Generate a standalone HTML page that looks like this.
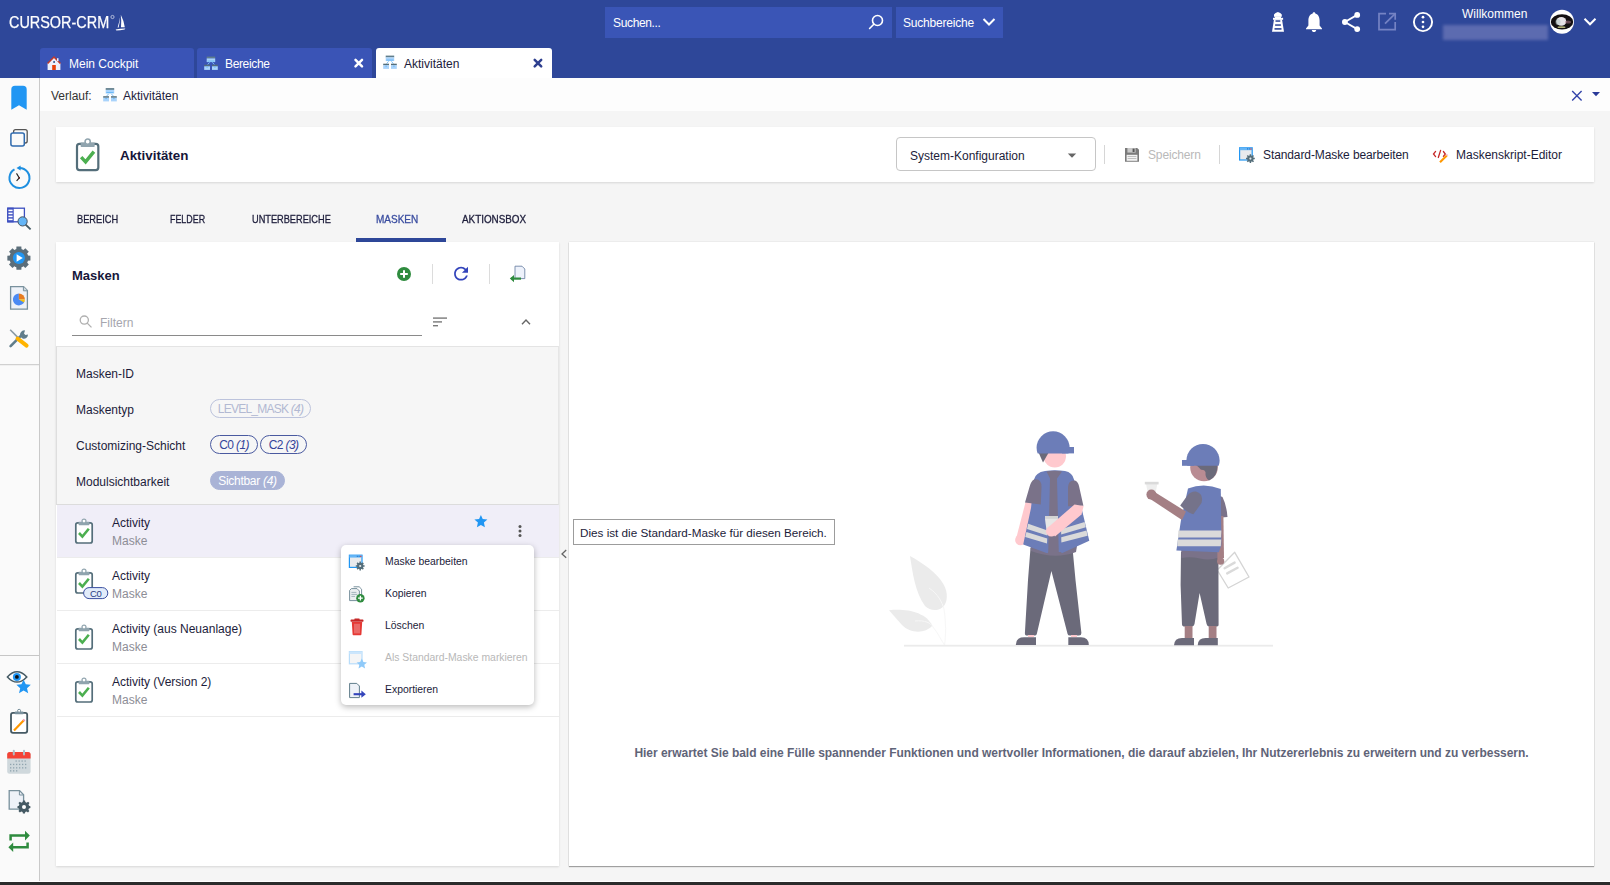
<!DOCTYPE html>
<html><head><meta charset="utf-8">
<style>
*{box-sizing:border-box;margin:0;padding:0}
html,body{width:1610px;height:885px;overflow:hidden;background:#f5f5f5;font-family:"Liberation Sans",sans-serif;color:#1c1c3a}
.abs{position:absolute}
svg{display:block}
/* header */
#hdr{position:absolute;left:0;top:0;width:1610px;height:78px;background:#2e4799}
#logo{position:absolute;left:9px;top:13px;color:#fff;-webkit-text-stroke:0.25px #fff;font-size:16.4px;letter-spacing:0;transform:scaleX(0.88);transform-origin:0 0;white-space:nowrap}
.srch{position:absolute;top:7px;height:31px;background:#3a55b6}
.srch span{position:absolute;color:#fff;font-size:12px;top:9px;white-space:nowrap}
.tab{position:absolute;top:48px;height:30px;background:#3a54b6;border-radius:3px 3px 0 0}
.tab .t{position:absolute;top:9px;font-size:12px;color:#fff;white-space:nowrap}
.tab.act{background:#fff}
.tab.act .t{color:#1c1c3a}
/* sidebar */
#side{position:absolute;left:0;top:78px;width:40px;height:804px;background:#fafafa;border-right:1px solid #c9c9c9}
/* breadcrumb */
#bc{position:absolute;left:40px;top:78px;width:1570px;height:33px;background:#fdfdfd}
.txt{position:absolute;white-space:nowrap;font-size:12px}
.card{position:absolute;background:#fff;box-shadow:0 1px 2px rgba(0,0,0,0.12)}
.mtab{position:absolute;top:213px;font-size:11px;transform-origin:0 0;-webkit-text-stroke:0.3px currentColor;color:#1c1c3a;white-space:nowrap}
.chip{position:absolute;height:19px;border-radius:10px;border:1px solid #4a5aa0;font-size:12px;color:#34449a;padding:0;white-space:nowrap;text-align:center;line-height:18px}
.chip i{font-style:italic}
.item{position:absolute;left:57px;width:502px;height:53px;border-bottom:1px solid #ececec}
.item .n{position:absolute;left:55px;top:11px;font-size:12px;color:#1c1c3a;white-space:nowrap}
.item .s{position:absolute;left:55px;top:29px;font-size:12px;color:#8d8d96;white-space:nowrap}
.mi{position:absolute;left:44px;font-size:10.4px;color:#1c1c3a;white-space:nowrap}
</style></head><body>

<div id="hdr">
  <div id="logo">CURSOR-CRM</div>
  <div class="srch" style="left:605px;width:287px"><span style="left:8px;letter-spacing:-0.35px">Suchen...</span></div>
  <div class="srch" style="left:896px;width:107px"><span style="left:7px;letter-spacing:-0.2px">Suchbereiche</span></div>

  <div class="tab" style="left:40px;width:154px"><span class="t" style="left:29px">Mein Cockpit</span></div>
  <div class="tab" style="left:197px;width:175px"><span class="t" style="left:28px;letter-spacing:-0.35px">Bereiche</span></div>
  <div class="tab act" style="left:376px;width:176px"><span class="t" style="left:28px">Aktivitäten</span></div>

  <div class="txt" style="left:1462px;top:7px;color:#fff;font-size:12px">Willkommen</div>
  <div class="abs" style="left:1443px;top:25px;width:105px;height:15px;background:#5c6bb0;filter:blur(1.5px)"></div>
</div>

<div id="side"></div>

<div id="bc">
  <div class="txt" style="left:11px;top:11px;color:#333">Verlauf:</div>
  <div class="txt" style="left:83px;top:11px;color:#1c1c3a">Aktivitäten</div>
</div>

<!-- header card -->
<div class="card" style="left:56px;top:127px;width:1538px;height:55px">
  <div class="txt" style="left:64px;top:21px;font-size:13.4px;font-weight:bold;color:#16163a">Aktivitäten</div>
  <div class="abs" style="left:840px;top:10px;width:200px;height:34px;border:1px solid #c6c6c6;border-radius:4px">
    <div class="txt" style="left:13px;top:11px">System-Konfiguration</div>
  </div>
  <div class="abs" style="left:1048px;top:18px;width:1px;height:19px;background:#d6d6d6"></div>
  <div class="txt" style="left:1092px;top:21px;color:#b9b9b9;letter-spacing:-0.15px">Speichern</div>
  <div class="abs" style="left:1163px;top:18px;width:1px;height:19px;background:#d6d6d6"></div>
  <div class="txt" style="left:1207px;top:21px;letter-spacing:-0.1px">Standard-Maske bearbeiten</div>
  <div class="txt" style="left:1400px;top:21px;letter-spacing:0px">Maskenskript-Editor</div>
</div>

<!-- masks tabs -->
<div class="mtab" style="left:77px;transform:scaleX(0.842)">BEREICH</div>
<div class="mtab" style="left:170px;transform:scaleX(0.808)">FELDER</div>
<div class="mtab" style="left:252px;transform:scaleX(0.837)">UNTERBEREICHE</div>
<div class="mtab" style="left:376px;color:#3a4da0;transform:scaleX(0.91)">MASKEN</div>
<div class="mtab" style="left:462px;transform:scaleX(0.896)">AKTIONSBOX</div>
<div class="abs" style="left:356px;top:238px;width:90px;height:4px;background:#2e4799"></div>

<!-- left panel -->
<div class="card" style="left:56px;top:242px;width:503px;height:624px">
  <div class="txt" style="left:16px;top:26px;font-size:13px;font-weight:bold;color:#16163a">Masken</div>
  <div class="abs" style="left:376px;top:22px;width:1px;height:20px;background:#dcdcdc"></div>
  <div class="abs" style="left:433px;top:22px;width:1px;height:20px;background:#dcdcdc"></div>
  <div class="txt" style="left:44px;top:74px;color:#a6a6ae">Filtern</div>
  <div class="abs" style="left:16px;top:93px;width:350px;height:1px;background:#8a8a8a"></div>
</div>
<div class="abs" style="left:56px;top:346px;width:503px;height:159px;background:#f6f6f6;border-top:1px solid #e4e4e4;border-left:1px solid #dedede;border-right:1px solid #e6e6e6;border-bottom:1px solid #dcdcdc">
  <div class="txt" style="left:19px;top:20px">Masken-ID</div>
  <div class="txt" style="left:19px;top:56px">Maskentyp</div>
  <div class="txt" style="left:19px;top:92px">Customizing-Schicht</div>
  <div class="txt" style="left:19px;top:128px">Modulsichtbarkeit</div>
  <div class="chip" style="left:153px;top:52px;width:101px;border-color:#bcc3dc;color:#b2b9d2;letter-spacing:-0.75px">LEVEL_MASK <i>(4)</i></div>
  <div class="chip" style="left:153px;top:88px;width:48px;letter-spacing:-0.6px">C0 <i>(1)</i></div>
  <div class="chip" style="left:203px;top:88px;width:47px;letter-spacing:-0.6px">C2 <i>(3)</i></div>
  <div class="chip" style="left:153px;top:124px;width:75px;background:#a9b3d6;border-color:#a9b3d6;color:#fff;letter-spacing:-0.3px">Sichtbar <i>(4)</i></div>
</div>
<div class="item" style="top:505px;background:#f0eef8;height:53px"><div class="n">Activity</div><div class="s">Maske</div></div>
<div class="item" style="top:558px"><div class="n">Activity</div><div class="s">Maske</div></div>
<div class="item" style="top:611px"><div class="n">Activity (aus Neuanlage)</div><div class="s">Maske</div></div>
<div class="item" style="top:664px"><div class="n">Activity (Version 2)</div><div class="s">Maske</div></div>


<!-- right panel -->
<div class="card" style="left:569px;top:242px;width:1025px;height:624px;box-shadow:0 1px 1px rgba(0,0,0,0.32),0 0 1.5px rgba(0,0,0,0.14)">
  <div class="txt" style="left:0;width:1025px;text-align:center;top:504px;font-weight:bold;color:#5f6478;letter-spacing:-0.03px">Hier erwartet Sie bald eine Fülle spannender Funktionen und wertvoller Informationen, die darauf abzielen, Ihr Nutzererlebnis zu erweitern und zu verbessern.</div>
</div>


<svg class="abs" style="left:0;top:0;z-index:5" width="1610" height="885" viewBox="0 0 1610 885">
<!-- logo sailboat -->
<g fill="#fff">
 <circle cx="112.5" cy="17" r="1.6" fill="none" stroke="#fff" stroke-width="0.6"/>
 <path d="M120.8 14.8 Q124 21 124.8 27.2 L121 27.2 Q121.6 21 120.8 14.8 Z"/>
 <path d="M120.2 16.5 Q119.4 22 117.6 27.6 L118.6 27.6 Q120 22 120.2 16.5 Z"/>
 <path d="M115.6 29.6 Q120 28.4 125.4 28.4 L124.6 29.4 Q120 30.4 116.4 30.4 Z"/>
</g>
<!-- search magnifier -->
<g stroke="#fff" stroke-width="1.6" fill="none">
 <circle cx="877.5" cy="20.5" r="5"/>
 <path d="M873.8 24.3 L869.6 28.5" stroke-linecap="round"/>
 <path d="M983.5 19 L989 24.5 L994.5 19" stroke-width="2"/>
</g>
<!-- lighthouse -->
<g fill="#fff">
 <path d="M1274 16.8 L1274 14.4 Q1275.2 12.8 1277.9 11.9 Q1280.6 12.8 1281.8 14.4 L1281.8 16.8 Z"/>
 <rect x="1274.8" y="16.4" width="6.2" height="1.6"/>
 <rect x="1273" y="17.8" width="10.1" height="2"/>
 <path d="M1274 19.6 L1282 19.6 L1284 31.8 L1272 31.8 Z"/>
</g>
<g fill="#2e4799">
 <rect x="1275.5" y="20.3" width="4.8" height="1.5"/>
 <rect x="1275.1" y="24.3" width="5.8" height="1.5"/>
 <rect x="1274.5" y="28.1" width="7" height="1.6"/>
</g>
<!-- bell -->
<path fill="#fff" d="M1314 12.3 C1315 12.3 1315.3 13 1315.3 13.6 C1318.5 14.5 1319.6 17.5 1319.6 20.5 L1319.6 25.5 L1322 28.6 L1322 29.3 L1306 29.3 L1306 28.6 L1308.4 25.5 L1308.4 20.5 C1308.4 17.5 1309.5 14.5 1312.7 13.6 C1312.7 13 1313 12.3 1314 12.3 Z M1311.8 30 L1316.2 30 C1316.2 31.3 1315.2 32.1 1314 32.1 C1312.8 32.1 1311.8 31.3 1311.8 30 Z"/>
<!-- share -->
<g fill="#fff">
 <circle cx="1357.2" cy="14.9" r="2.9"/>
 <circle cx="1344.9" cy="22" r="2.9"/>
 <circle cx="1357.2" cy="29.1" r="2.9"/>
 <path d="M1357.2 14.9 L1344.9 22 L1357.2 29.1" fill="none" stroke="#fff" stroke-width="1.8"/>
</g>
<!-- external link (disabled) -->
<g stroke="#7583c4" stroke-width="1.7" fill="none">
 <path d="M1386 13.6 L1379 13.6 L1379 29.6 L1395.2 29.6 L1395.2 22"/>
 <path d="M1389 13.6 L1395.2 13.6 L1395.2 19.8"/>
 <path d="M1385 23.6 L1395 13.8"/>
</g>
<!-- info/kebab circle -->
<g>
 <circle cx="1423" cy="22" r="9.1" fill="none" stroke="#fff" stroke-width="1.9"/>
 <circle cx="1423" cy="17.2" r="1.35" fill="#fff"/>
 <circle cx="1423" cy="22" r="1.35" fill="#fff"/>
 <circle cx="1423" cy="26.8" r="1.35" fill="#fff"/>
</g>
<!-- avatar -->
<circle cx="1562" cy="21.8" r="12" fill="#fff"/>
<ellipse cx="1562" cy="21.9" rx="11.2" ry="7.6" fill="#141012"/>
<ellipse cx="1561.3" cy="21.4" rx="5" ry="4.4" fill="#e6e2e6"/>
<ellipse cx="1558" cy="22" rx="2.5" ry="3" fill="#b8c8c8" opacity="0.6"/>
<ellipse cx="1568" cy="22" rx="3" ry="1.6" fill="#a07080" opacity="0.6"/>
<ellipse cx="1561.5" cy="27.2" rx="4" ry="0.9" fill="#d8d890" opacity="0.8"/>
<path d="M1584.5 18.8 L1590 24.3 L1595.5 18.8" stroke="#fff" stroke-width="2" fill="none"/>


<!-- sidebar icons -->
<path d="M11.3 89.5 Q11.3 85.8 15 85.8 L23 85.8 Q26.7 85.8 26.7 89.5 L26.7 109.7 L19 105.3 L11.3 109.7 Z" fill="#2196f3"/>
<rect x="13.6" y="129.6" width="13.6" height="13.4" rx="2" fill="none" stroke="#555" stroke-width="1.3"/>
<rect x="10.9" y="132.9" width="13.4" height="13.2" rx="2" fill="#fafafa" stroke="#2f6aae" stroke-width="1.5"/>
<g>
 <path d="M14.5 169.3 A10 10 0 1 0 19 168" fill="none" stroke="#1e8fe0" stroke-width="2"/>
 <path d="M16.5 168 L20.6 165.4 L20.6 170.6 Z" fill="#1e8fe0"/>
 <path d="M16.5 173.4 L19.3 177.9 L16.6 180.8" fill="none" stroke="#222" stroke-width="1.1"/><circle cx="19.2" cy="177.9" r="0.8" fill="#5a1010"/>
</g>
<g>
 <rect x="7.8" y="208.2" width="16.6" height="13.6" fill="#fff" stroke="#3d4fc0" stroke-width="1.3"/>
 <rect x="7.2" y="207.6" width="6.5" height="14.8" fill="#3d4fc0"/>
 <rect x="8.4" y="209.6" width="4.2" height="1.6" fill="#fff"/>
 <rect x="8.4" y="212.6" width="4.2" height="1.6" fill="#fff"/>
 <rect x="8.4" y="215.6" width="4.2" height="1.6" fill="#fff"/>
 <rect x="8.4" y="218.6" width="4.2" height="1.6" fill="#fff"/>
 <path d="M25.5 224.5 L30.6 229.4" stroke="#455a64" stroke-width="1.8"/>
 <circle cx="22.6" cy="221.4" r="4.6" fill="#64b5f6" stroke="#4a5560" stroke-width="1"/>
</g>
<g>
 <path fill="#5b6e7a" d="M27.51 255.47 L30.44 255.65 L30.44 260.55 L27.51 260.73 L26.85 262.33 L28.80 264.53 L25.33 268.00 L23.13 266.05 L21.53 266.71 L21.35 269.64 L16.45 269.64 L16.27 266.71 L14.67 266.05 L12.47 268.00 L9.00 264.53 L10.95 262.33 L10.29 260.73 L7.36 260.55 L7.36 255.65 L10.29 255.47 L10.95 253.87 L9.00 251.67 L12.47 248.20 L14.67 250.15 L16.27 249.49 L16.45 246.56 L21.35 246.56 L21.53 249.49 L23.13 250.15 L25.33 248.20 L28.80 251.67 L26.85 253.87 Z"/><circle cx="18.9" cy="258.1" r="9.4" fill="#5b6e7a"/>
 <circle cx="18.9" cy="258" r="6" fill="#2196f3"/>
 <path d="M16.6 254.2 L22.8 258 L16.6 261.8 Z" fill="#fff"/>
</g>
<g>
 <path d="M10.6 286.6 L23.6 286.6 L27.4 290.6 L27.4 309.2 L10.6 309.2 Z" fill="#eef2f8" stroke="#78909c" stroke-width="1.3"/>
 <path d="M23.4 286.6 L23.4 290.8 L27.4 290.8" fill="#cfd8dc" stroke="#78909c" stroke-width="1"/>
 <path d="M18.9 299.4 L18.9 293.4 A6 6 0 1 0 24.6 301.3 Z" fill="#4a8af4"/>
 <path d="M18.9 299.4 L18.9 293.4 A6 6 0 0 1 24.9 299.4 Z" fill="#e67c22"/>
 <path d="M18.9 299.4 L24.9 299.4 A6 6 0 0 1 24 302.4 Z" fill="#f4c20d"/>
</g>
<g>
 <path d="M10.2 329.8 L18 337.6" stroke="#8a9aa4" stroke-width="1.6"/>
 <path d="M10.6 346.2 L21.6 335.2" stroke="#607d8b" stroke-width="2.6" stroke-linecap="round"/>
 <path d="M21 332 A4 4 0 1 0 28 334.6 L25.4 335 L24 333.4 L25 330.4 A4 4 0 0 0 21 332 Z" fill="#607d8b"/>
 <path d="M17.6 338.6 L26.6 345.6" stroke="#ffb300" stroke-width="4" stroke-linecap="round"/>
</g>
<rect x="0" y="364.2" width="39" height="1" fill="#c6c6c6"/>
<rect x="0" y="655" width="39" height="1" fill="#c6c6c6"/>
<g>
 <path d="M7.4 676.9 Q17 666.5 26.8 676.9 Q17 687.3 7.4 676.9 Z" fill="#fff" stroke="#455a64" stroke-width="1.5"/>
 <circle cx="16.9" cy="676.9" r="4" fill="#2196f3"/>
 <circle cx="16.9" cy="676.9" r="1.9" fill="#111"/>
 <path d="M23.6 679.8 L25.8 684.3 L30.8 684.8 L27 688.2 L28.2 693.2 L23.6 690.6 L19 693.2 L20.2 688.2 L16.4 684.8 L21.4 684.3 Z" fill="#2196f3"/>
</g>
<g>
 <rect x="11" y="712.8" width="16.2" height="20" rx="2" fill="#fff" stroke="#455a64" stroke-width="1.8"/>
 <rect x="14.6" y="711.6" width="9" height="2.6" rx="1" fill="#78909c"/>
 <circle cx="19.1" cy="710.8" r="1.5" fill="#fff" stroke="#78909c" stroke-width="1"/>
 <path d="M14 730.4 L23.6 720.6" stroke="#ff9800" stroke-width="2.2"/>
 <path d="M23.4 720.8 L24.6 719.6" stroke="#f48fb1" stroke-width="2.2"/>
</g>
<g>
 <rect x="7.2" y="752" width="23.4" height="21.8" rx="2.5" fill="#cfd8dc"/>
 <path d="M7.2 758.6 L7.2 754.5 Q7.2 752 9.7 752 L28.1 752 Q30.6 752 30.6 754.5 L30.6 758.6 Z" fill="#f44336"/>
 <rect x="12.8" y="749.8" width="2" height="5.6" rx="1" fill="#b0bec5"/>
 <rect x="23" y="749.8" width="2" height="5.6" rx="1" fill="#b0bec5"/>
 <g fill="#90a4ae">
  <rect x="15.5" y="760.4" width="1.3" height="1.3"/><rect x="18.5" y="760.4" width="1.3" height="1.3"/><rect x="21.5" y="760.4" width="1.3" height="1.3"/><rect x="24.5" y="760.4" width="1.3" height="1.3"/>
  <rect x="10" y="763.8" width="1.3" height="1.3"/><rect x="13" y="763.8" width="1.3" height="1.3"/><rect x="16" y="763.8" width="1.3" height="1.3"/><rect x="19" y="763.8" width="1.3" height="1.3"/><rect x="22" y="763.8" width="1.3" height="1.3"/><rect x="25" y="763.8" width="1.3" height="1.3"/>
  <rect x="10" y="767.2" width="1.3" height="1.3"/><rect x="13" y="767.2" width="1.3" height="1.3"/><rect x="16" y="767.2" width="1.3" height="1.3"/><rect x="19" y="767.2" width="1.3" height="1.3"/><rect x="22" y="767.2" width="1.3" height="1.3"/><rect x="25" y="767.2" width="1.3" height="1.3"/>
  <rect x="10" y="770.2" width="1.3" height="1.3"/><rect x="13" y="770.2" width="1.3" height="1.3"/><rect x="16" y="770.2" width="1.3" height="1.3"/>
 </g>
</g>
<g>
 <path d="M9.2 790.6 L19.6 790.6 L23.6 794.8 L23.6 809.2 L9.2 809.2 Z" fill="#eef2f8" stroke="#78909c" stroke-width="1.3"/>
 <path d="M19.4 790.6 L19.4 795 L23.6 795" fill="none" stroke="#78909c" stroke-width="1"/>
 <g transform="translate(24 807)">
  <path fill="#455a64" d="M-1.3 -6.8 L1.3 -6.8 L1.7 -4.7 L3.4 -4 L5.2 -5.2 L7 -3.4 L5.8 -1.6 L6.5 0.1 L8.2 0.5 L8.2 3 L6.3 3.4 L5.7 5 L6.9 6.8 L5.1 8.6 L3.3 7.4 L1.6 8.1 L1.2 10 L-1.4 10 L-1.8 8.1 L-3.5 7.4 L-5.3 8.6 L-7.1 6.8 L-5.9 5 L-6.6 3.4 L-8.4 3 L-8.4 0.5 L-6.6 0.1 L-5.9 -1.6 L-7.1 -3.4 L-5.3 -5.2 L-3.5 -4 L-1.7 -4.7 Z" transform="scale(0.78) translate(0 -1.6)"/>
  <circle cx="0" cy="0" r="2" fill="#fff"/>
 </g>
</g>
<g fill="none" stroke="#2e8b3e" stroke-width="2.5">
 <path d="M10.6 840.6 L10.6 835.6 L26 835.6"/>
 <path d="M27.6 842.4 L27.6 847.2 L12 847.2"/>
</g>
<path d="M29.8 835.6 L25 830.8 L25 840.4 Z" fill="#2e8b3e"/>
<path d="M8.4 847.2 L13.2 842.4 L13.2 852 Z" fill="#2e8b3e"/>


<!-- header card icons -->
<defs>
 <g id="clip">
  <rect x="1" y="3.6" width="16.4" height="20.2" rx="2" fill="#fff" stroke="#546e7a" stroke-width="1.7"/>
  <path d="M3.8 2.6 L14.6 2.6 L14.6 5.4 Q14.6 6 14 6 L4.4 6 Q3.8 6 3.8 5.4 Z" fill="#90a4ae"/>
  <circle cx="9.2" cy="1.9" r="2" fill="#fff" stroke="#90a4ae" stroke-width="1.2"/>
  <path d="M4.2 13.8 L7.6 17.4 L14 9.6" fill="none" stroke="#4caf50" stroke-width="2.6"/>
 </g>
</defs>
<use href="#clip" transform="translate(75.7 139.2) scale(1.3)"/>
<use href="#clip" x="74.8" y="519.2"/>
<use href="#clip" x="74.8" y="569.2"/>
<use href="#clip" x="74.8" y="625.2"/>
<use href="#clip" x="74.8" y="678.2"/>
<rect x="83.6" y="587.6" width="24.2" height="11" rx="5.5" fill="#e2ecfa" stroke="#3a4fa0" stroke-width="1"/>
<text x="95.7" y="596.6" font-family="Liberation Sans" font-size="9.5" fill="#2a3a80" text-anchor="middle" letter-spacing="-0.4">C0</text>
<!-- dropdown caret -->
<path d="M1067.8 153.6 L1076.2 153.6 L1072 157.8 Z" fill="#666"/>
<!-- floppy -->
<g>
 <path d="M1125 148 L1137.2 148 L1139 149.8 L1139 161.8 L1125 161.8 Z" fill="#7a7a7a"/>
 <rect x="1127.4" y="148" width="8.2" height="4.6" fill="#c9c9c9"/>
 <rect x="1132.6" y="148.6" width="2" height="3.4" fill="#555"/>
 <rect x="1126.6" y="154.8" width="10.8" height="6" fill="#f2f2f2"/>
 <rect x="1127.6" y="156.2" width="8.8" height="0.7" fill="#aaa"/>
 <rect x="1127.6" y="158.2" width="8.8" height="0.7" fill="#aaa"/>
</g>
<!-- window gear -->
<defs>
 <g id="wingear">
  <rect x="0.6" y="0.6" width="12.6" height="12.2" fill="#e8eaed" stroke="#2196f3" stroke-width="1.2"/>
  <rect x="0.6" y="0.6" width="12.6" height="2.4" fill="#64b5f6"/>
  <rect x="8" y="1.2" width="1" height="1" fill="#1565c0"/><rect x="9.8" y="1.2" width="1" height="1" fill="#1565c0"/><rect x="11.4" y="1.2" width="1.2" height="1.2" fill="#e53935"/>
  <g transform="translate(11.4 11.4)">
   <circle r="3.2" fill="#546e7a"/>
   <g stroke="#546e7a" stroke-width="1.5"><path d="M0 -4.4 V4.4 M-4.4 0 H4.4 M-3.1 -3.1 L3.1 3.1 M3.1 -3.1 L-3.1 3.1"/></g>
   <circle r="1.1" fill="#e8eaed"/>
  </g>
 </g>
</defs>
<use href="#wingear" x="1239" y="147.2"/>
<!-- code pencil -->
<g fill="none" stroke="#c62828" stroke-width="1.3" stroke-linecap="round">
 <path d="M1435.6 151.4 L1433.5 154 L1435.6 156.6"/>
 <path d="M1440.6 150.4 L1438.3 157.5"/>
 <path d="M1443.4 151.5 L1445.3 154 L1443.4 156.3"/>
</g>
<path d="M1440 162.2 L1446.8 155.4" stroke="#ff9800" stroke-width="2.1"/>
<path d="M1446.6 155.6 L1447.6 154.6" stroke="#f8bbd0" stroke-width="2.1"/>
<!-- panel toolbar -->
<circle cx="404" cy="274" r="7" fill="#2e8b3e"/>
<path d="M404 270.2 V277.8 M400.2 274 H407.8" stroke="#fff" stroke-width="2"/>
<path transform="translate(450.6 263.2) scale(0.87)" fill="#3344bb" d="M17.65 6.35C16.2 4.9 14.21 4 12 4c-4.42 0-7.99 3.58-7.99 8s3.57 8 7.99 8c3.73 0 6.84-2.55 7.73-6h-2.08c-.82 2.33-3.04 4-5.65 4-3.31 0-6-2.69-6-6s2.69-6 6-6c1.66 0 3.14.69 4.22 1.78L13 11h7V4l-2.35 2.35z"/>
<g>
 <path d="M515 266.2 L522 266.2 L524.8 269 L524.8 278.6 L515 278.6 Z" fill="#eef2fb" stroke="#6f86a6" stroke-width="0.9"/>
 <path d="M511.2 278.6 L521 278.6" stroke="#2e8b3e" stroke-width="2.2"/>
 <path d="M509.8 278.6 L514 275 L514 282.2 Z" fill="#2e8b3e"/>
</g>
<g fill="none" stroke="#b0b0b0" stroke-width="1.3">
 <circle cx="84.3" cy="320.1" r="4.1"/>
 <path d="M87.2 323.1 L91.5 327.4"/>
</g>
<g fill="#7a7a7a">
 <rect x="433" y="317.4" width="14" height="1.4"/>
 <rect x="433" y="321.2" width="9" height="1.4"/>
 <rect x="433" y="325" width="5" height="1.4"/>
</g>
<path d="M522 324.2 L526 320 L530 324.2" fill="none" stroke="#666" stroke-width="1.4"/>
<!-- star & kebab -->
<path d="M480.9 514.9 L482.7 519 L487.4 519.5 L483.9 522.6 L484.9 527.3 L480.9 524.9 L476.9 527.3 L477.9 522.6 L474.4 519.5 L479.1 519 Z" fill="#2196f3"/>
<circle cx="520" cy="526.4" r="1.5" fill="#555"/>
<circle cx="520" cy="531" r="1.5" fill="#555"/>
<circle cx="520" cy="535.5" r="1.5" fill="#555"/>
<path d="M566.2 550 L562 553.9 L566.2 557.8" fill="none" stroke="#666" stroke-width="1.3"/>


<!-- illustration -->
<g id="illus">
 <!-- plant -->
 <path d="M910 556 C932 568 950 584 946.5 600 C944.5 611 932 613 925 606 C915 592 912.5 572 910 556 Z" fill="#ebebeb"/>
 <path d="M889 610.3 C906 608.5 926 612 932.2 625.8 C925 634 910 633.5 902 625 Z" fill="#ebebeb"/>
 <path d="M929 588 C938 594 942 602 944 609 C946 622 946 636 944.5 645" fill="none" stroke="#f7f7f7" stroke-width="1"/>
 <path d="M915 621 C925 620 931 623 933 627 C938 633 941 640 944.5 645" fill="none" stroke="#f7f7f7" stroke-width="1"/>
 <rect x="904" y="644.8" width="369" height="1.8" fill="#ebebeb"/>

 <!-- man 1 -->
 <g>
  <!-- pants -->
  <path d="M1030.5 548 L1072.5 548 L1075.5 580 L1081.4 633 Q1081.4 635.5 1079 635.6 L1070 635.6 Q1068 635.6 1067.6 634 L1051.4 571 L1036.8 634 Q1036.4 635.6 1034.6 635.6 L1027 635.6 Q1024.8 635.6 1024.9 633 L1028 580 Z" fill="#6b6a7a"/>
  <rect x="1028" y="635" width="6" height="2" fill="#ffc9ce"/>
  <rect x="1071" y="635" width="6" height="2" fill="#ffc9ce"/>
  <path d="M1015.8 645 Q1016 637.2 1024 637.2 L1036 637.2 L1036 645 Z" fill="#6b6a7a"/>
  <path d="M1068.3 645 L1068.3 637.2 L1081 637.2 Q1088.8 637.2 1088.8 645 Z" fill="#6b6a7a"/>
  <!-- shirt bottom -->
  <path d="M1030 540 L1078 540 L1076 552 Q1055 560 1031 551 Z" fill="#7a7289"/>
  <!-- left arm -->
  <path d="M1025.6 502 L1035 503.6 L1025.4 542 L1016 539 Z" fill="#ffc9ce"/>
  <circle cx="1020.4" cy="540" r="5.3" fill="#ffc9ce"/>
  <!-- vest -->
  <path d="M1034 479.5 Q1035.5 472.5 1045 471 Q1055 469.4 1065 471 Q1072.5 472.5 1074 479.5 L1082 510 L1089.3 540.8 L1061.8 553.3 L1061 552 L1049 552 L1047.2 553.3 L1023.2 544.6 L1031 508 Z" fill="#6c7db8"/>
  <path d="M1046.5 471.4 Q1054 470 1062 471.4 L1057 478.5 L1058.8 553 L1048.2 553 L1050 478.5 Z" fill="#7a7289"/>
  <!-- sleeves -->
  <path d="M1034 479.5 Q1041.5 478 1041.5 487 L1040.8 504.5 L1025 502.5 L1029.5 487 Q1031 481 1034 479.5 Z" fill="#7a7289"/>
  <path d="M1068 487 Q1068.5 479.5 1075 480.5 Q1078 481.5 1079 486 L1083.4 505.8 L1068 506.2 Z" fill="#7a7289"/>
  <!-- stripes -->
  <path d="M1028.2 523.8 L1047.5 530.4 L1047.3 535.5 L1027 529 Z" fill="#dadada"/>
  <path d="M1026.4 532 L1047.2 538.6 L1047 543.6 L1025.2 537 Z" fill="#dadada"/>
  <path d="M1061 529.3 L1084.6 522 L1085.8 527.2 L1061.2 534.4 Z" fill="#dadada"/>
  <path d="M1061.2 537.2 L1086.5 530.6 L1087.6 535.8 L1061.4 542.6 Z" fill="#dadada"/>
  <!-- cup -->
  <path d="M1045 516.4 L1058 516.4 L1058 519 L1056.5 530.5 L1046.5 530.5 L1045 519 Z" fill="#e6e6e6"/>
  <rect x="1045" y="516" width="13" height="2.8" fill="#d4d4d4"/>
  <!-- right arm -->
  <path d="M1074.5 504.5 L1083.6 506 L1081.5 514.5 L1055 536.5 L1048 527.5 Z" fill="#ffc9ce"/>
  <circle cx="1051.3" cy="531.2" r="5.3" fill="#ffc9ce"/>
  <!-- head -->
  <circle cx="1054.8" cy="456.3" r="11.2" fill="#ffc9ce"/>
  <path d="M1038.4 452 L1049 452 L1043 462.5 Z" fill="#6b6a7a"/>
  <clipPath id="h1clip"><rect x="1030" y="425" width="50" height="28.4"/></clipPath>
  <circle cx="1053.1" cy="447.8" r="16.5" fill="#6c7db8" clip-path="url(#h1clip)"/>
  <rect x="1062" y="447" width="12" height="6.4" fill="#6c7db8"/>
 </g>

 <!-- man 2 -->
 <g>
  <!-- paper -->
  <path d="M1217.2 570 L1234.7 552.3 L1249 577 L1228.2 588 Z" fill="#fff" stroke="#d4d4d4" stroke-width="1.3" stroke-linejoin="round"/>
  <path d="M1224.6 568.2 L1234.6 562.6 M1227.2 573.4 L1237.6 567.8" stroke="#dadada" stroke-width="2.4" stroke-linecap="round"/>
  <!-- pants -->
  <path d="M1181 552 L1218.4 552 L1218.6 625 Q1218.6 626.4 1217 626.4 L1209 626.4 Q1207 626.4 1206.6 624 L1199.6 593 L1194.5 624 Q1194 626.4 1192 626.4 L1183.6 626.4 Q1182 626.4 1182 624.6 L1180.6 585 Z" fill="#6b6a7a"/>
  <rect x="1184.7" y="626" width="7.8" height="12.4" fill="#a47f84"/>
  <rect x="1208.7" y="626" width="7.8" height="12.4" fill="#a47f84"/>
  <path d="M1174 645.2 Q1174.4 638 1182 638 L1194 638 L1194 645.2 Z" fill="#6b6a7a"/>
  <path d="M1197.7 645.2 Q1198 638 1205.6 638 L1217.8 638 L1217.8 645.2 Z" fill="#6b6a7a"/>
  <!-- shirt bottom -->
  <path d="M1181 545 L1218.5 545 L1218.5 557.5 Q1210 561 1200 558.6 Q1190 556 1181.5 558 Z" fill="#7a7289"/>
  <!-- right sleeve & arm -->
  <path d="M1220 496 L1222.5 497 Q1226.5 505 1227.5 517 L1221 517.6 Z" fill="#7a7289"/>
  <path d="M1217 516 L1223.4 516 L1224 558 L1217.4 559 Z" fill="#a47f84"/>
  <circle cx="1220.6" cy="561.2" r="3.6" fill="#a47f84"/>
  <!-- vest -->
  <path d="M1188 488.6 Q1204 482 1220.8 489 L1221.4 545 L1218.8 552.3 L1176.4 550.6 L1181 520 Z" fill="#6c7db8"/>
  <rect x="1178.2" y="530.6" width="43" height="6.8" fill="#dadada" transform="skewX(-3)" transform-origin="1200 534"/>
  <rect x="1177.4" y="539.4" width="43.6" height="6.8" fill="#dadada" transform="skewX(-3)" transform-origin="1200 543"/>
  <!-- cup -->
  <path d="M1146 483.5 L1157.4 483.5 L1156 491 L1147.4 491 Z" fill="#eeeeee"/>
  <rect x="1144.8" y="481.8" width="13.8" height="2.6" fill="#dadada"/>
  <!-- arm forward -->
  <path d="M1153 491 L1186 511.6 L1182 520 L1149.5 498.5 Z" fill="#a47f84"/>
  <circle cx="1151.4" cy="494.6" r="5" fill="#a47f84"/>
  <!-- left sleeve -->
  <path d="M1196 491.5 Q1204 494 1201.5 503 L1193.4 514.3 Q1188 513 1180.2 505.5 L1187.8 495 Q1191 491 1196 491.5 Z" fill="#75738a"/>
  <!-- head -->
  <circle cx="1204" cy="467.4" r="13.8" fill="#b98c93"/>
  <path d="M1196 465 L1217.6 465 Q1217.5 477 1209 480.4 Q1205 478 1205.5 472 Q1204.6 469.5 1201 469.8 Q1198.6 467 1196 465 Z" fill="#6b6a7a"/>
  <clipPath id="h2clip"><rect x="1180" y="438" width="45" height="27.8"/></clipPath>
  <circle cx="1203" cy="460.5" r="16.6" fill="#6c7db8" clip-path="url(#h2clip)"/>
  <rect x="1182" y="460" width="12" height="5.8" fill="#6c7db8"/>
 </g>
</g>

<!-- tab icons -->
<g>
 <path d="M47.6 63.6 L54 57 L60.4 63.6 L60.4 70 L47.6 70 Z" fill="#eef0fa"/>
 <path d="M47.6 63.6 L54 57 L60.4 63.6" fill="none" stroke="#c0392b" stroke-width="1.5"/>
 <rect x="52.2" y="65" width="3.6" height="5" fill="#e8410a"/>
 <rect x="53.3" y="61.2" width="1.6" height="1.6" fill="#0d3c7a"/>
 <rect x="57" y="58.2" width="1.5" height="3" fill="#eef0fa"/>
</g>
<g id="sitemap">
 <rect x="205.6" y="56.2" width="10.6" height="14.4" fill="#fff" opacity="0" />
 <rect x="206.7" y="56.6" width="8.5" height="1.8" fill="#607d8b"/>
 <rect x="206.7" y="58.4" width="8.5" height="3.7" fill="#a9d3fb"/>
 <rect x="207.4" y="60.6" width="7.1" height="0.9" fill="#64b5f6"/>
 <path d="M209.6 62.4 L207.6 64.6 M212.4 62.4 L214.4 64.6" stroke="#7cc0f8" stroke-width="1"/>
 <rect x="204.2" y="64.7" width="5.8" height="1.6" fill="#546e7a"/>
 <rect x="204.2" y="66.3" width="5.8" height="3.6" fill="#a9d3fb"/>
 <rect x="212" y="64.7" width="5.8" height="1.6" fill="#546e7a"/>
 <rect x="212" y="66.3" width="5.8" height="3.6" fill="#a9d3fb"/>
 <rect x="206.4" y="66.6" width="1.4" height="1" fill="#64b5f6"/>
 <rect x="214.2" y="66.6" width="1.4" height="1" fill="#64b5f6"/>
</g>
<use href="#sitemap" x="179" y="-1"/>
<use href="#sitemap" x="-101" y="31.5"/>
<g stroke="#fff" stroke-width="2.5" stroke-linecap="round">
 <path d="M355.5 59.8 L362 66.3 M362 59.8 L355.5 66.3"/>
</g>
<g stroke="#2e3f8f" stroke-width="2.5" stroke-linecap="round">
 <path d="M534.7 59.8 L541.2 66.3 M541.2 59.8 L534.7 66.3"/>
</g>
<!-- breadcrumb right -->
<path d="M1572.2 91 L1581.6 100.5 M1581.6 91 L1572.2 100.5" stroke="#3344aa" stroke-width="1.4"/>
<path d="M1592 92 L1600 92 L1596 96.2 Z" fill="#2a3a99"/>
</svg>

<!-- tooltip -->
<div class="abs" style="left:573px;top:519px;width:262px;height:26px;background:#fff;border:1px solid #9c9c9c;z-index:6">
  <div class="txt" style="left:6px;top:6px;font-size:11.7px;color:#1c1c3a">Dies ist die Standard-Maske für diesen Bereich.</div>
</div>
<!-- context menu -->
<div class="abs" style="left:341px;top:545px;width:193px;height:160px;background:#fff;border-radius:5px;box-shadow:0 2px 6px rgba(0,0,0,0.28);z-index:6">
  <div class="mi" style="top:11px">Maske bearbeiten</div>
  <div class="mi" style="top:43px">Kopieren</div>
  <div class="mi" style="top:75px">Löschen</div>
  <div class="mi" style="top:107px;color:#b8b8b8">Als Standard-Maske markieren</div>
  <div class="mi" style="top:139px">Exportieren</div>
</div>
<svg class="abs" style="left:0;top:0;z-index:7" width="1610" height="885" viewBox="0 0 1610 885">
 <use href="#wingear" x="348.8" y="554.6"/>
 <g>
  <path d="M351.4 588.6 L357 588.6 L359.4 591 L359.4 600.6 L349.6 600.6 L349.6 590.4 Z" fill="#eceff1" stroke="#78909c" stroke-width="1"/>
  <path d="M353.6 586.8 L359.2 586.8 L361.6 589.2 L361.6 597" fill="none" stroke="#78909c" stroke-width="1"/>
  <g stroke="#90a4ae" stroke-width="0.8"><path d="M351.4 592.4 H356.4 M351.4 594.4 H357.4 M351.4 596.4 H355"/></g>
  <circle cx="360.4" cy="598.2" r="4.2" fill="#2e8b3e"/>
  <path d="M360.4 595.8 V600.6 M358 598.2 H362.8" stroke="#fff" stroke-width="1.3"/>
 </g>
 <g>
  <rect x="350.6" y="619.6" width="12.8" height="2.2" rx="0.6" fill="#c62828"/>
  <rect x="354.4" y="618.6" width="5.2" height="1.6" rx="0.5" fill="#c62828"/>
  <path d="M351.8 622 L362.2 622 L361.4 634.6 Q361.3 635.2 360.6 635.2 L353.4 635.2 Q352.7 635.2 352.6 634.6 Z" fill="#e53935"/>
  <g stroke="#ef9a9a" stroke-width="1"><path d="M355 623.8 V633.4 M357 623.8 V633.4 M359 623.8 V633.4"/></g>
 </g>
 <g opacity="0.45">
  <rect x="349.4" y="651.6" width="12.6" height="12.2" fill="#e8eaed" stroke="#64b5f6" stroke-width="1.2"/>
  <rect x="349.4" y="651.6" width="12.6" height="2.4" fill="#90caf9"/>
 </g>
 <path d="M361.8 658.6 L363.4 662 L367 662.4 L364.3 664.8 L365.1 668.4 L361.8 666.5 L358.5 668.4 L359.3 664.8 L356.6 662.4 L360.2 662 Z" fill="#90caf9"/>
 <g>
  <path d="M349.6 683.4 L356.8 683.4 L359.4 686 L359.4 697.6 L349.6 697.6 Z" fill="#eef2f8" stroke="#607d8b" stroke-width="1"/>
  <path d="M353.6 694.2 L362 694.2" stroke="#3344bb" stroke-width="2.1"/>
  <path d="M365.8 694.2 L361.4 690.6 L361.4 697.8 Z" fill="#3344bb"/>
 </g>
</svg>
<div class="abs" style="left:0;top:881px;width:1610px;height:1px;background:#fff;z-index:8"></div><div class="abs" style="left:0;top:882px;width:1610px;height:3px;background:#2b2b2b;z-index:8"></div>
</body></html>
